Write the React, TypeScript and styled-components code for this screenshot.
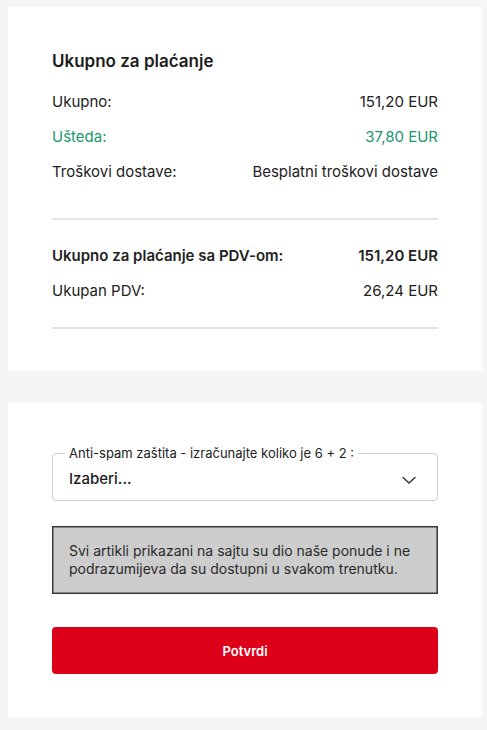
import React from 'react';
import styled, { createGlobalStyle } from 'styled-components';

const GlobalStyle = createGlobalStyle`
  html, body {
    margin: 0;
    padding: 0;
    background: #f5f5f5;
  }
  body {
    font-family: Inter, 'Noto Sans', Arial, sans-serif;
    color: #222;
  }
`;

const Page = styled.div`
  display: flex;
  flex-direction: column;
  gap: 32px;
  padding: 7px 5px 13px 8px;
`;

const Card = styled.section<{ $top: number; $bottom: number }>`
  background: #fff;
  padding: ${(p) => p.$top}px 44px ${(p) => p.$bottom}px;
  display: flex;
  flex-direction: column;
`;

const Heading = styled.h2`
  margin: 0 0 19px;
  font-size: 17px;
  line-height: 24px;
  font-weight: 600;
  color: #1c1c1c;
`;

const Row = styled.div<{ $green?: boolean; $bold?: boolean }>`
  display: flex;
  justify-content: space-between;
  align-items: center;
  font-size: 15px;
  line-height: 20px;
  font-weight: ${(p) => (p.$bold ? 600 : 400)};
  color: ${(p) => (p.$green ? '#21976b' : '#222')};

  & + & {
    margin-top: 15px;
  }
`;

const Divider = styled.hr<{ $before: number; $after: number }>`
  border: none;
  height: 2px;
  background: #e3e3e3;
  margin: ${(p) => p.$before}px 0 ${(p) => p.$after}px;
`;

const Field = styled.fieldset`
  margin: 0;
  padding: 0 12px 4px 16px;
  border: 1px solid #cfcfcf;
  border-radius: 4px;
`;

const Legend = styled.legend`
  padding: 0 4px;
  margin-left: -4px;
  font-size: 13px;
  line-height: 14px;
  color: #222;
`;

const SelectRow = styled.div`
  height: 36px;
  display: flex;
  align-items: center;
  justify-content: space-between;
  font-size: 15px;
  font-weight: 500;
  color: #1c1c1c;
  cursor: pointer;
`;

const Chevron = styled.svg`
  width: 16px;
  height: 16px;
  margin-right: 8px;
  margin-top: 4px;
`;

const Notice = styled.div`
  margin-top: 25px;
  background: #cdcdcd;
  border: 1px solid #3a3a3a;
  box-shadow: inset 0 0 0 0.5px #3a3a3a;
  padding: 15px 16px;
  font-size: 14px;
  line-height: 18px;
  color: #2a2a2a;
`;

const SubmitButton = styled.button`
  margin-top: 33px;
  height: 47px;
  border: none;
  border-radius: 4px;
  background: #dc0019;
  color: #fff;
  font-family: inherit;
  font-size: 13px;
  font-weight: 600;
  cursor: pointer;
`;

export default function App() {
  return (
    <>
      <GlobalStyle />
      <Page>
        <Card $top={42} $bottom={42}>
          <Heading>Ukupno za plaćanje</Heading>
          <Row>
            <span>Ukupno:</span>
            <span>151,20 EUR</span>
          </Row>
          <Row $green>
            <span>Ušteda:</span>
            <span>37,80 EUR</span>
          </Row>
          <Row>
            <span>Troškovi dostave:</span>
            <span>Besplatni troškovi dostave</span>
          </Row>
          <Divider $before={36} $after={26} />
          <Row $bold>
            <span>Ukupno za plaćanje sa PDV-om:</span>
            <span>151,20 EUR</span>
          </Row>
          <Row>
            <span>Ukupan PDV:</span>
            <span>26,24 EUR</span>
          </Row>
          <Divider $before={26} $after={0} />
        </Card>

        <Card $top={43} $bottom={43}>
          <Field>
            <Legend>Anti-spam zaštita - izračunajte koliko je 6 + 2 :</Legend>
            <SelectRow>
              <span>Izaberi...</span>
              <Chevron viewBox="0 0 16 16" fill="none">
                <path d="M2 5.5l6 5.5 6-5.5" stroke="#333" strokeWidth="1.5" strokeLinecap="round" strokeLinejoin="round" />
              </Chevron>
            </SelectRow>
          </Field>
          <Notice>
            Svi artikli prikazani na sajtu su dio naše ponude i ne podrazumijeva da su dostupni u svakom trenutku.
          </Notice>
          <SubmitButton type="button">Potvrdi</SubmitButton>
        </Card>
      </Page>
    </>
  );
}
